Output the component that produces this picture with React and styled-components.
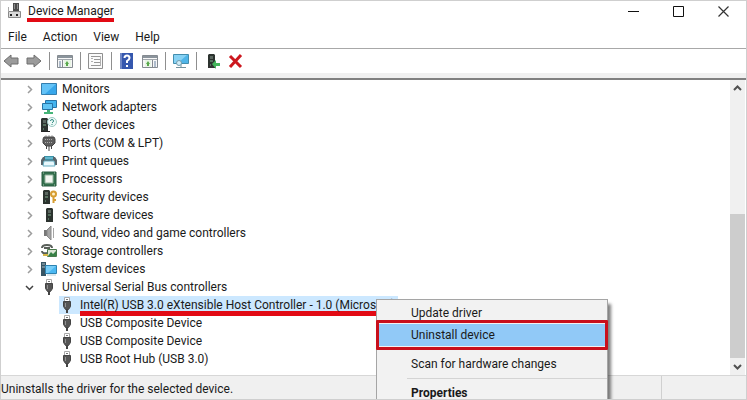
import React from 'react'
import styled, { createGlobalStyle } from 'styled-components'

const GlobalStyle = createGlobalStyle`
	* {
		box-sizing: border-box;
	}
	body {
		margin: 0;
		overflow: hidden;
		background: #fff;
		color: #1a1a1a;
		font: 12px/18px Roboto, "Open Sans", sans-serif;
	}
	button {
		margin: 0;
		padding: 0;
		border: 0;
		background: none;
		color: inherit;
		font: inherit;
		text-align: left;
	}
`

// window frame
const Window = styled.div`
	position: relative;
	display: flex;
	flex-direction: column;
	height: 100vh;
	overflow: hidden;
	border: 1px solid #cfcfcf;
`
const TitleBar = styled.header`
	display: flex;
	align-items: center;
	height: 20px;
	flex: none;
	padding-left: 5px;
`
const Title = styled.h1`
	margin: 0 0 0 5px;
	padding-left: 1px;
	font-size: 12px;
	font-weight: 400;
	line-height: 14px;
	box-shadow: 0 4px 0 #e20a14;
`
const WindowButtons = styled.div`
	display: flex;
	margin-left: auto;
`
const WindowButton = styled.button`
	display: flex;
	justify-content: center;
	align-items: center;
	width: 45px;
	height: 20px;
`
const MenuBar = styled.nav`
	display: flex;
	flex: none;
	align-items: center;
	gap: 16px;
	height: 28px;
	padding: 4px 7px 0;
	border-bottom: 1px solid #a8a8a8;
`

// toolbar
const Toolbar = styled.div`
	display: flex;
	flex: none;
	align-items: center;
	gap: 7px;
	height: 24px;
	padding-left: 2px;
`
const Tool = styled.button`
	display: flex;
	justify-content: center;
	width: 16px;
	height: 16px;
`
const Divider = styled.span`
	width: 1px;
	height: 18px;
	background: #8f8f8f;
`
const Strip = styled.div`
	flex: none;
	height: 7px;
	background: #f0f0f0;
	border-bottom: 2px solid #808080;
`

// device tree
const Main = styled.main`
	display: flex;
	flex: 1;
	min-height: 0;
`
const Tree = styled.ul`
	flex: 1;
	min-width: 0;
	margin: 0;
	padding: 0;
	list-style: none;
`
const Children = styled.ul`
	margin: 0;
	padding: 0 0 0 58px;
	list-style: none;
`
const Row = styled.div`
	display: flex;
	align-items: center;
	height: 18px;
	padding-left: 24px;
	white-space: nowrap;
`
const Expander = styled.button`
	display: flex;
	justify-content: center;
	width: 9px;
	margin-right: 7px;
`
const DeviceRow = styled.div`
	display: flex;
	align-items: center;
	width: max-content;
	height: 18px;
	padding-right: 3px;
	background: ${({ $selected }) => ($selected ? '#cce8ff' : 'none')};
	white-space: nowrap;
`
const Label = styled.span`
	margin-left: 5px;
`
const MarkedLabel = styled(Label)`
	height: 18px;
	border-bottom: 3px solid #e20a14;
	box-shadow: 0 2px 0 #e20a14;
`

// scroll bar
const ScrollBar = styled.div`
	display: flex;
	flex-direction: column;
	flex: none;
	width: 15px;
	margin-right: 1px;
	background: #f0f0f0;
`
const ScrollButton = styled.button`
	display: flex;
	justify-content: center;
	align-items: center;
	height: 17px;
	flex: none;
`
const Track = styled.div`
	display: flex;
	flex: 1;
	flex-direction: column;
	justify-content: flex-end;
`
const Thumb = styled.div`
	height: 55%;
	background: #cdcdcd;
`

const StatusBar = styled.footer`
	display: flex;
	flex: none;
	height: 24px;
	border-top: 1px solid #d7d7d7;
	background: #f0f0f0;
	line-height: 26px;
`
const StatusText = styled.div`
	width: 661px;
	border-right: 1px solid #d0d0d0;
`

// context menu
const ContextMenu = styled.div`
	position: absolute;
	top: 298px;
	left: 375px;
	width: 232px;
	padding: 2px 0;
	border: 1px solid #a5a5a5;
	background: #f2f2f2;
	box-shadow: 4px 4px 3px -1px rgba(0, 0, 0, 0.5);
`
const MenuItem = styled.button`
	display: block;
	width: 100%;
	height: 22px;
	padding-left: ${({ $active }) => ($active ? '32px' : '34px')};
	line-height: 22px;
	font-weight: ${({ $bold }) => ($bold ? 700 : 400)};
	background: ${({ $active }) => ($active ? '#91c9f7' : 'none')};
`
const MenuSeparator = styled.hr`
	height: 1px;
	margin: 3px 0 3px 30px;
	border: 0;
	background: #d4d4d4;
`
const Highlight = styled.div`
	position: relative;
	margin: -4px -1px;
	padding: 1px 0;
	border: 3px solid #c9101c;
	border-radius: 1px;
	background: #f2f2f2;
`

function Icon ({ w = 16, h = 16, children }) {
	return (
		<svg width={w} height={h} viewBox={`0 0 ${w} ${h}`} aria-hidden="true">
			{children}
		</svg>
	)
}

// the black tower that several device icons are built on
function Tower ({ x = 4 }) {
	return (
		<g transform={`translate(${x} 0)`}>
			<path d="M1 1h5l1 1v13H0V2z" fill="#2c332f" />
			<path d="M2 3h3v3H2z" fill="#5b6760" />
			<path d="M2 8h3M2 12h1" stroke="#7fae8c" />
		</g>
	)
}

function ConsoleIcon ({ flip }) {
	return (
		<Icon>
			<path d="M.5 2.5h15v12H.5z" fill="#f7f7f7" stroke="#858b91" />
			<path d="M1 3h14v2H1z" fill="#8b949c" />
			<path d="M1 6.5h14" stroke="#a1a7ad" />
			<path d={flip ? 'M10.5 7v7' : 'M5.5 7v7'} stroke="#858b91" />
			<path d={flip ? 'M12 9h2M12 11h2M12 13h2' : 'M2 9h2M2 11h2M2 13h2'} stroke="#6781a0" />
			<path d={flip ? 'M3 7h6v7H3z' : 'M7 7h7v7H7z'} fill="#e8f5e4" />
			<path d={flip ? 'M6 8l2 3H7v2H5v-2H4z' : 'M10 8l2 3h-1v2H9v-2H8z'} fill="#58a84b" />
		</Icon>
	)
}

const icons = {
	computer: (
		<>
			<path d="M7 0h6v9H7z" fill="#4c4c4c" />
			<path d="M8 1h1v5H8zM11 1h1v5h-1z" fill="#8d8d8d" />
			<path d="M2.5 8.5h12v6h-12z" fill="#d9d9d9" stroke="#8a8a8a" />
			<path d="M4 11h2v2H4zM10 11h2v2h-2z" fill="#222" />
			<path d="M2.5 4v4" stroke="#aaa" />
		</>
	),
	monitor: (
		<>
			<path d="M.5 2.5h15v11H.5z" fill="#38a7eb" stroke="#357eae" />
			<path d="M1 3h14L4 13H1z" fill="#64c3f7" />
		</>
	),
	network: (
		<>
			<path d="M4.5 1.5h11v7h-11z" fill="#42b3ef" stroke="#2874a6" />
			<path d="M1.5 4.5h10v6h-10z" fill="#62c5f5" stroke="#2874a6" />
			<path d="M6 11h3v3H6z" fill="#45ae72" />
			<path d="M3 14h9" stroke="#45b578" strokeWidth="2" />
		</>
	),
	other: (
		<>
			<Tower x={0} />
			<path d="M0 14h9v1H0z" fill="#222" />
			<circle cx="11" cy="5" r="4.5" fill="#eefaf8" stroke="#9cc9c3" />
			<path d="M9.5 4q0-1.500 1.500-1.500T12.500 4q0 1-1.500 2M11 7v1" fill="none" stroke="#338c83" />
		</>
	),
	ports: (
		<>
			<path d="M5 0v3M8 0v3M11 0v3" stroke="#aaa" />
			<path d="M3 2h10l1 2v4l-3 3H5L2 8V4z" fill="#5d5d5d" stroke="#444" />
			<path d="M4 4.5h8M4 7.5h8" stroke="#aaa" strokeDasharray="1 1" />
			<path d="M5.500 11v3M8 11v5M10.500 11v3" stroke="#444" />
		</>
	),
	printer: (
		<>
			<path d="M3 3h10v4H3z" fill="#3c91a6" />
			<path d="M0 7l2-3h2v3h8V4h2l2 3v5H0z" fill="#59656b" />
			<path d="M4 4h8v2H4z" fill="#62b8cf" />
			<path d="M3 8h10l1 5H2z" fill="#e9f8fc" stroke="#67aec2" />
		</>
	),
	processor: (
		<>
			<path d="M1 1h14v14H1z" fill="#34704e" stroke="#285d40" />
			<path d="M4 4h8v8H4z" fill="#f4f7f2" stroke="#92b39c" />
			<path d="M2 2h1M13 2h1M2 14h1M13 14h1" stroke="#a5c6af" />
		</>
	),
	security: (
		<>
			<Tower x={2} />
			<circle cx="12.500" cy="5" r="2.500" fill="#fff2cc" stroke="#d69d32" strokeWidth="2" />
			<path d="M12.500 8v6M13 11h2" stroke="#d69d32" strokeWidth="2" />
		</>
	),
	software: <Tower x={5} />,
	sound: (
		<>
			<path d="M3 5h3v6H3z" fill="#777" />
			<path d="M6 5l4-4v14l-4-4z" fill="#a5a5a5" stroke="#888" />
			<path d="M12.500 3v10" fill="none" stroke="#a5a5a5" />
		</>
	),
	storage: (
		<>
			<path d="M1 5q0-3 5-3t5 3M1 8q0 3 5 2M3 5h6" fill="none" stroke="#595f59" strokeWidth="2" />
			<path d="M6.500 6.500h9v7h-9z" fill="#dce6d6" stroke="#49794b" />
			<path d="M7 13l3-4 2 2 3-3v5z" fill="#378146" />
			<path d="M2 12h5" stroke="#d2b545" strokeWidth="2" />
		</>
	),
	system: (
		<>
			<path d="M0 1h5v14H0z" fill="#375564" />
			<path d="M1 3h3M1 6h3" stroke="#a8bdc6" />
			<path d="M4.500 4.500h11v8h-11z" fill="#4bb8f2" stroke="#2e83b1" />
			<path d="M5 5h10l-8 7H5z" fill="#78cef8" />
			<path d="M6 14h9" stroke="#b4cdd8" />
		</>
	),
	usb: (
		<>
			<path d="M5.500.5h5V5h-5z" fill="#fff" stroke="#aaa" />
			<path d="M7 2h2v1H7z" fill="#777" />
			<path d="M4.500 4.500h7v5l-2 3h-3l-2-3z" fill="#555" stroke="#444" />
			<path d="M6 6h1v4H6z" fill="#929292" />
			<path d="M8 12v4" stroke="#444" strokeWidth="2" />
		</>
	)
}

const tools = [
	{
		name: 'Back',
		icon: <path d="M1 8l7-6v3h7v6H8v3z" fill="#9b9b9b" stroke="#6e6e6e" />
	},
	{
		name: 'Forward',
		icon: <path d="M15 8L8 2v3H1v6h7v3z" fill="#9b9b9b" stroke="#6e6e6e" />
	},
	null,
	{ name: 'Show/Hide Console Tree', drawing: <ConsoleIcon /> },
	null,
	{
		name: 'Properties',
		icon: (
			<>
				<path d="M.5.5h14v15H.5z" fill="#fafafa" stroke="#8f8f8f" />
				<path d="M3 3.500h9M6 6.500h6M6 9.500h6M3 12.500h9" stroke="#969696" />
				<path d="M3 5.500h2M3 8.500h2M12.500 3v10" stroke="#b0b0b0" />
			</>
		)
	},
	null,
	{
		name: 'Help',
		icon: (
			<>
				<path d="M1 0h13v16H1z" fill="#3557ae" />
				<path d="M1 0h2v16H1z" fill="#7087c5" />
				<path d="M5.500 5q0-2.500 2.500-2.500T10.500 5q0 1.500-2.500 3v2M8 12v2" fill="none" stroke="#fff" strokeWidth="2" />
			</>
		)
	},
	{ name: 'Show/Hide Action Pane', drawing: <ConsoleIcon flip /> },
	null,
	{
		name: 'Scan for hardware changes',
		icon: (
			<>
				<path d="M.5 1.500h15v9H.5z" fill="#50b5e8" stroke="#438eae" />
				<path d="M1 2h13L5 10H1z" fill="#87d2f4" />
				<path d="M8 11v3M3 14.500h10" stroke="#74929d" />
				<circle cx="6" cy="10" r="2.500" fill="#d1eef9" stroke="#759cac" />
			</>
		)
	},
	null,
	{
		name: 'Update driver',
		icon: (
			<>
				<Tower x={4} />
				<path d="M4 14h7" stroke="#333" strokeWidth="2" />
				<path d="M8 11l4-4v3h4v3h-4v3z" fill="#43b55b" />
			</>
		)
	},
	{
		name: 'Uninstall device',
		icon: <path d="M3 3l11 11M14 2L3 14" stroke="#cc171e" strokeWidth="3" />
	}
]

const categories = [
	['monitor', 'Monitors'],
	['network', 'Network adapters'],
	['other', 'Other devices'],
	['ports', 'Ports (COM & LPT)'],
	['printer', 'Print queues'],
	['processor', 'Processors'],
	['security', 'Security devices'],
	['software', 'Software devices'],
	['sound', 'Sound, video and game controllers'],
	['storage', 'Storage controllers'],
	['system', 'System devices'],
	['usb', 'Universal Serial Bus controllers']
]

const usbDevices = [
	'Intel(R) USB 3.0 eXtensible Host Controller - 1.0 (Microsoft)',
	'USB Composite Device',
	'USB Composite Device',
	'USB Root Hub (USB 3.0)'
]

function Category ({ icon, name, open, children }) {
	return (
		<li role="treeitem" aria-expanded={!!open}>
			<Row>
				<Expander aria-label={`${open ? 'Collapse' : 'Expand'} ${name}`}>
					<Icon w={9} h={9}>
						<path d={open ? 'M1 3l3.500 3.500L8 3' : 'M3 1l3.500 3.500L3 8'} fill="none" stroke={open ? '#404040' : '#9d9d9d'} strokeWidth="1.500" />
					</Icon>
				</Expander>
				<Icon>{icons[icon]}</Icon>
				<Label>{name}</Label>
			</Row>
			{children}
		</li>
	)
}

function DeviceTree () {
	return (
		<Tree role="tree" aria-label="Devices">
			{categories.map(([icon, name]) => (
				<Category key={name} icon={icon} name={name} open={icon === 'usb'}>
					{icon === 'usb' && (
						<Children role="group">
							{usbDevices.map((device, i) => (
								<li key={i} role="treeitem" aria-selected={i === 0}>
									<DeviceRow $selected={i === 0}>
										<Icon>{icons.usb}</Icon>
										{i === 0 ? <MarkedLabel>{device}</MarkedLabel> : <Label>{device}</Label>}
									</DeviceRow>
								</li>
							))}
						</Children>
					)}
				</Category>
			))}
		</Tree>
	)
}

function App () {
	return (
		<Window>
			<GlobalStyle />
			<TitleBar>
				<Icon>{icons.computer}</Icon>
				<Title>Device Manager</Title>
				<WindowButtons>
					<WindowButton aria-label="Minimize">
						<Icon w={11} h={11}><path d="M0 5.500h11" stroke="#111" /></Icon>
					</WindowButton>
					<WindowButton aria-label="Maximize">
						<Icon w={11} h={11}><path d="M.5.5h10v10H.5z" fill="none" stroke="#111" /></Icon>
					</WindowButton>
					<WindowButton aria-label="Close">
						<Icon w={11} h={11}><path d="M.5.5l10 10M10.500.5l-10 10" stroke="#333" strokeWidth="1.200" /></Icon>
					</WindowButton>
				</WindowButtons>
			</TitleBar>
			<MenuBar>
				<button>File</button>
				<button>Action</button>
				<button>View</button>
				<button>Help</button>
			</MenuBar>
			<Toolbar role="toolbar">
				{tools.map((tool, i) => (tool
					? <Tool key={i} aria-label={tool.name}>{tool.drawing || <Icon>{tool.icon}</Icon>}</Tool>
					: <Divider key={i} />
				))}
			</Toolbar>
			<Strip />
			<Main>
				<DeviceTree />
				<ScrollBar>
					<ScrollButton aria-label="Scroll up">
						<Icon w={9} h={9}><path d="M1 6l3.500-3.500L8 6" fill="none" stroke="#505050" strokeWidth="2" /></Icon>
					</ScrollButton>
					<Track><Thumb /></Track>
					<ScrollButton aria-label="Scroll down">
						<Icon w={9} h={9}><path d="M1 3l3.500 3.500L8 3" fill="none" stroke="#505050" strokeWidth="2" /></Icon>
					</ScrollButton>
				</ScrollBar>
			</Main>
			<StatusBar>
				<StatusText>Uninstalls the driver for the selected device.</StatusText>
			</StatusBar>
			<ContextMenu role="menu">
				<MenuItem role="menuitem">Update driver</MenuItem>
				<Highlight>
					<MenuItem role="menuitem" $active>Uninstall device</MenuItem>
				</Highlight>
				<MenuSeparator />
				<MenuItem role="menuitem">Scan for hardware changes</MenuItem>
				<MenuSeparator />
				<MenuItem role="menuitem" $bold>Properties</MenuItem>
			</ContextMenu>
		</Window>
	)
}

export default App
